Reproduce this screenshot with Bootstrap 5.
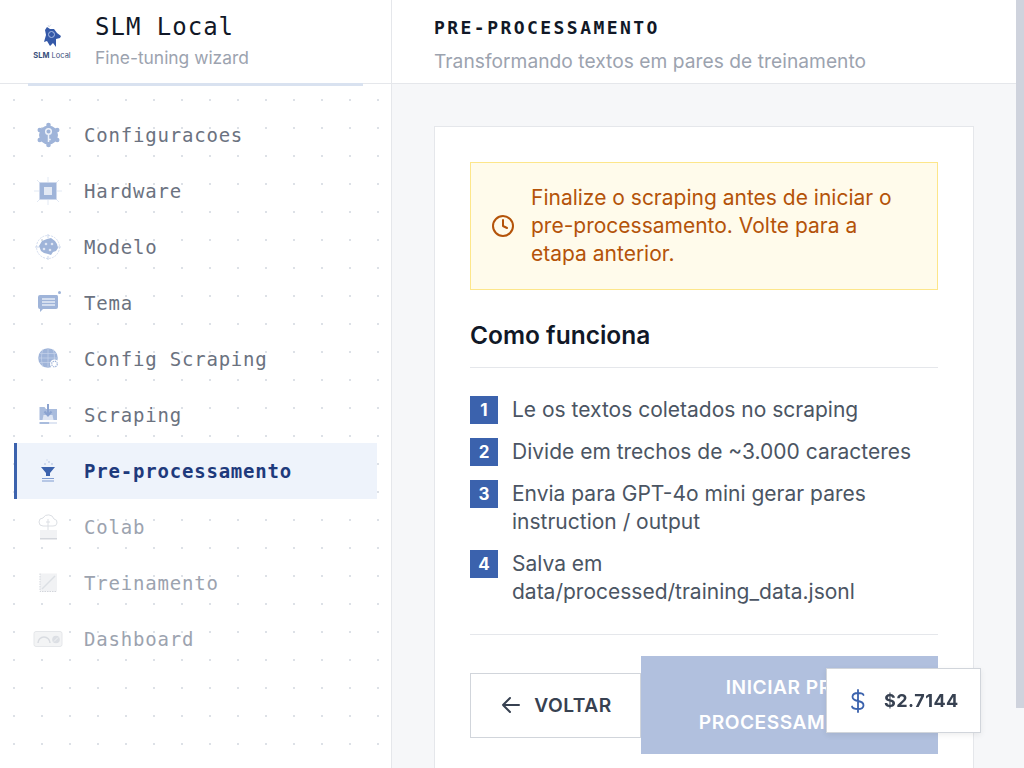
<!DOCTYPE html>
<html lang="pt-BR">
<head>
<meta charset="utf-8">
<title>SLM Local</title>
<link href="https://cdn.jsdelivr.net/npm/bootstrap@5.3.0/dist/css/bootstrap.min.css" rel="stylesheet">
<style>
html,body{height:100%;overflow:hidden}
body{font-family:Inter,"Liberation Sans",sans-serif;background:#f6f7f9;color:#111827}
.shell{height:768px}
.side{width:392px;flex:none;border-right:1px solid #e5e7eb;background-color:#fff;background-image:radial-gradient(circle,#dde1e7 .9px,transparent 1.2px);background-size:28px 28px;background-position:0 2px}
.brandbar{height:84px;background:#fff;border-bottom:1px solid #e5e7eb;padding-left:28px;gap:19px}
.brandname{font-family:"DejaVu Sans Mono",monospace;font-size:24px;line-height:32px;letter-spacing:1px;color:#111827;margin-top:-1px}
.brandsub{font-size:17.4px;line-height:28px;color:#9ca3af;margin-top:1px}
.logotext{font-size:7.5px;line-height:9px;color:#3a4f7c;white-space:nowrap;text-align:center;margin-top:2px}
.sideline{height:3px;margin:0 28px;background:#d9e2f0;margin-top:-1px}
.steps{margin:21px 14px 0 14px}
.stepitem{height:56px;border-left:3px solid transparent;padding-left:15px;gap:20px;color:#6b7280;font-family:"DejaVu Sans Mono",monospace;font-size:19px;letter-spacing:.8px}
.stepitem svg{flex:none}
.stepitem.here{background:#eef3fb;border-left-color:#3b62ad;color:#1e3a7c;font-weight:700}
.stepitem.off{color:#9ca3af}
.pane{min-width:0;overflow:hidden}
.rail{width:8px;flex:none;background:#f6f7f9}
.railthumb{height:708px;background:#cfd3dd}
.panehead{height:84px;background:#fff;border-bottom:1px solid #e5e7eb;padding:6px 42px 0}
.panetitle{font-family:"DejaVu Sans Mono",monospace;font-weight:700;font-size:18px;line-height:24px;letter-spacing:2.45px;color:#111827;margin:0;margin-top:2px}
.panesub{font-size:19.2px;line-height:28px;color:#9ca3af;margin-top:7px;letter-spacing:.03px}
.panebody{padding:42px 42px 42px}
.sheet{background:#fff;border:1px solid #e5e7eb;padding:35px}
.warn{background:#fffbeb;border:1px solid #fde68a;color:#b45309;font-size:21px;line-height:28px;padding:21px 30px 21px 20px;gap:16px}
.warn svg{flex:none}
.howtitle{font-size:24.5px;font-weight:600;line-height:32px;color:#111827;margin:29px 0 0;padding-bottom:16px;border-bottom:1px solid #e5e7eb}
.howlist{list-style:none;margin:28px 0 0;padding:0 0 28px;border-bottom:1px solid #e5e7eb;gap:14px;color:#4b5563;font-size:21px;line-height:28px}
.hownum{width:28px;height:28px;flex:none;background:#3b62ad;color:#fff;font-size:17px;font-weight:700}
.howtext{margin-left:14px}
.actions{margin-top:21px}
.backbtn{height:65px;width:171px;flex:none;border:1px solid #d1d5db;background:#fff;color:#374151;font-size:19.2px;font-weight:600;letter-spacing:.5px;border-radius:0;gap:11px}
.gobtn.btn:disabled{width:297px;height:98px;flex:none;background:#b1c0de;color:#fff;font-size:19.2px;font-weight:600;line-height:35px;letter-spacing:.5px;border-radius:0;border:0;padding:0 50px;text-transform:uppercase;opacity:1}
.cost{position:fixed;left:826px;top:668px;width:155px;height:65px;background:#fff;border:1px solid #d1d5db;box-shadow:0 2px 6px rgba(0,0,0,.07);padding-left:22px;gap:17px;font-size:18px;font-weight:700;color:#374151;letter-spacing:.5px}
</style>
</head>
<body>
<div class="shell d-flex">
  <aside class="side d-flex flex-column">
    <div class="brandbar d-flex align-items-center">
      <div class="d-flex flex-column align-items-center" style="width:48px">
        <svg width="20" height="25" viewBox="0 0 20 25"><path fill="#3559a8" d="M5 3l3 2h4l3 4 4 3-1 2-4 1v8l-3-4-3 3-3-5-3 1 2-7-1-5z"/><circle cx="9.500" cy="10.500" r="3" fill="none" stroke="#a9bde6" stroke-width="1"/><path d="M6 1l1 2 2-2.500" stroke="#c4cee2" stroke-width=".7" fill="none"/></svg>
        <div class="logotext"><b>SLM</b> Local</div>
      </div>
      <div class="d-flex flex-column">
        <div class="brandname">SLM Local</div>
        <div class="brandsub">Fine-tuning wizard</div>
      </div>
    </div>
    <div class="sideline"></div>
    <nav class="nav flex-column flex-nowrap steps">
      <a class="stepitem d-flex align-items-center text-decoration-none" href="#">
        <svg width="32" height="32" viewBox="0 0 32 32"><g fill="#9fb4d9"><circle cx="16.500" cy="16" r="9.500"/><circle cx="16.500" cy="6" r="2.300"/><circle cx="16.500" cy="26" r="2.300"/><circle cx="7.800" cy="11" r="2.300"/><circle cx="25.200" cy="11" r="2.300"/><circle cx="7.800" cy="21" r="2.300"/><circle cx="25.200" cy="21" r="2.300"/></g><circle cx="16.500" cy="12.500" r="2.800" fill="none" stroke="#eef2f9" stroke-width="1.500"/><path d="M16.500 15.500v7.500m0-2.500h2.200" fill="none" stroke="#eef2f9" stroke-width="1.500"/></svg>
        Configuracoes</a>
      <a class="stepitem d-flex align-items-center text-decoration-none" href="#">
        <svg width="32" height="32" viewBox="0 0 32 32"><path d="M5 5l4 4M27 5l-4 4M5 27l4-4M27 27l-4-4M2 16h5M25 16h5M16 2v5M16 25v5" stroke="#dbe3f1" stroke-width=".8"/><rect x="7.500" y="7.500" width="17" height="17" fill="#9fb4d9"/><rect x="12" y="12" width="8" height="8" fill="#e3e9f4"/></svg>
        Hardware</a>
      <a class="stepitem d-flex align-items-center text-decoration-none" href="#">
        <svg width="32" height="32" viewBox="0 0 32 32"><circle cx="16" cy="16" r="11.500" fill="none" stroke="#d5def0" stroke-width="1" stroke-dasharray="2 1"/><path d="M16 3v4M16 25v4M3 16h4M25 16h4" stroke="#cdd8ec" stroke-width="1"/><path fill="#9fb4d9" d="M7 15l3-5 5-2 4-1 4 3 2 3 1 4-2 3-3 1-2 3-3-1-4-1-3-2z"/><circle cx="14" cy="13" r="1.300" fill="#dfe6f3"/><circle cx="20" cy="13" r="1.300" fill="#dfe6f3"/><circle cx="18" cy="19" r="1.300" fill="#dfe6f3"/><circle cx="12" cy="18" r="1.300" fill="#dfe6f3"/></svg>
        Modelo</a>
      <a class="stepitem d-flex align-items-center text-decoration-none" href="#">
        <svg width="32" height="32" viewBox="0 0 32 32"><path fill="#9fb4d9" d="M8 8h17a2 2 0 0 1 1 2v10a2 2 0 0 1-2 2H11l-3 3v-3a2 2 0 0 1-2-2V10a2 2 0 0 1 2-2z"/><path d="M10 12h13M10 15h13M10 18h13" stroke="#e6ecf6" stroke-width="1.300"/><circle cx="27.500" cy="5.500" r="1.500" fill="#9fb4d9"/></svg>
        Tema</a>
      <a class="stepitem d-flex align-items-center text-decoration-none" href="#">
        <svg width="32" height="32" viewBox="0 0 32 32"><circle cx="16" cy="15" r="9.800" fill="#9fb4d9"/><path d="M6 15h20M7.500 10.500h17M7.500 19.500h17M16 5v20M11 6c-2 5-2 13 0 18M21 6c2 5 2 13 0 18" fill="none" stroke="#c5d2e9" stroke-width=".7"/><circle cx="22.500" cy="21" r="4.500" fill="#fff"/><circle cx="22.500" cy="21" r="2.800" fill="none" stroke="#9fb4d9" stroke-width="1.200" stroke-dasharray="1.400 .8"/></svg>
        Config Scraping</a>
      <a class="stepitem d-flex align-items-center text-decoration-none" href="#">
        <svg width="32" height="32" viewBox="0 0 32 32"><path fill="#a9bcdd" d="M7.500 8l5 0 1.500 2h11v11h-17.500z"/><path fill="#dfe6f3" d="M11.500 16h9l1 5h-11z"/><path d="M16 5v11M12.500 12.500l3.500 4 3.500-4" fill="none" stroke="#8ba3d0" stroke-width="2"/><rect x="7.500" y="23" width="10" height="2" fill="#a9bcdd"/><rect x="17.500" y="23" width="7.500" height="2" fill="#dfe6f3"/></svg>
        Scraping</a>
      <a class="stepitem here d-flex align-items-center text-decoration-none" href="#">
        <svg width="32" height="32" viewBox="0 0 32 32"><path fill="#3b62ad" d="M9 12h14l-5 6v3h-4v-3z"/><path d="M10 23.500h12M10 26h12" stroke="#7f9bd0" stroke-width="1"/><circle cx="13" cy="9" r=".8" fill="#a9bcdd"/><circle cx="17" cy="7" r=".8" fill="#a9bcdd"/><circle cx="20" cy="9" r=".8" fill="#a9bcdd"/><circle cx="15" cy="5" r=".7" fill="#c6d3ea"/></svg>
        Pre-processamento</a>
      <a class="stepitem off d-flex align-items-center text-decoration-none" href="#">
        <svg width="32" height="32" viewBox="0 0 32 32"><path d="M11 15h10a3.500 3.500 0 0 0 1-7 6 6 0 0 0-11-1 4 4 0 0 0 0 8z" fill="#fff" stroke="#dcdfe4" stroke-width="1"/><path d="M16 8v11M14 11h4" stroke="#dcdfe4" stroke-width="1"/><rect x="8" y="19" width="17" height="9" fill="#f1f2f4"/><rect x="8" y="27" width="17" height="1.500" fill="#d3d6dc"/></svg>
        Colab</a>
      <a class="stepitem off d-flex align-items-center text-decoration-none" href="#">
        <svg width="32" height="32" viewBox="0 0 32 32"><rect x="8" y="6.500" width="17" height="18" fill="#f1f2f4"/><path d="M8 6.500v18h17" fill="none" stroke="#d3d6dc" stroke-width="1" stroke-dasharray="1.500 1"/><path d="M10 22L23 9" stroke="#dcdfe4" stroke-width="1.500"/></svg>
        Treinamento</a>
      <a class="stepitem off d-flex align-items-center text-decoration-none" href="#">
        <svg width="32" height="32" viewBox="0 0 32 32"><rect x="2" y="8.500" width="28" height="15" rx="2" fill="#f3f4f5" stroke="#e5e7ea" stroke-width="1"/><path d="M6 20a6 6 0 0 1 12 0" fill="none" stroke="#d9dce1" stroke-width="1.500"/><circle cx="24" cy="16.500" r="3.800" fill="#dcdfe4"/><path d="M22 18.500l4-4" stroke="#f3f4f5" stroke-width="1"/></svg>
        Dashboard</a>
    </nav>
  </aside>
  <main class="pane flex-grow-1">
    <header class="panehead d-flex flex-column justify-content-center">
      <h1 class="panetitle">PRE-PROCESSAMENTO</h1>
      <div class="panesub">Transformando textos em pares de treinamento</div>
    </header>
    <div class="panebody">
      <section class="sheet">
        <div class="warn d-flex align-items-center">
          <svg width="24" height="24" viewBox="0 0 24 24" fill="none" stroke="#b45309" stroke-width="2" stroke-linecap="round" stroke-linejoin="round"><circle cx="12" cy="12" r="10"/><path d="M12 6v6l4 2"/></svg>
          <div>Finalize o scraping antes de iniciar o pre-processamento. Volte para a etapa anterior.</div>
        </div>
        <h2 class="howtitle">Como funciona</h2>
        <ol class="howlist d-flex flex-column">
          <li class="d-flex"><span class="hownum d-flex align-items-center justify-content-center">1</span><span class="howtext">Le os textos coletados no scraping</span></li>
          <li class="d-flex"><span class="hownum d-flex align-items-center justify-content-center">2</span><span class="howtext">Divide em trechos de ~3.000 caracteres</span></li>
          <li class="d-flex"><span class="hownum d-flex align-items-center justify-content-center">3</span><span class="howtext">Envia para GPT-4o mini gerar pares instruction / output</span></li>
          <li class="d-flex"><span class="hownum d-flex align-items-center justify-content-center">4</span><span class="howtext">Salva em data/processed/training_data.jsonl</span></li>
        </ol>
        <div class="actions d-flex align-items-center">
          <button type="button" class="btn backbtn d-flex align-items-center justify-content-center">
            <svg width="24" height="24" viewBox="0 0 24 24" fill="none" stroke="#374151" stroke-width="2" stroke-linecap="round" stroke-linejoin="round"><path d="M20 12H4M11 19l-7-7 7-7"/></svg>
            VOLTAR
          </button>
          <button type="button" class="btn gobtn" disabled>Iniciar Pre-processamento</button>
        </div>
      </section>
    </div>
  </main>
  <div class="rail"><div class="railthumb"></div></div>
</div>
<div class="cost d-flex align-items-center">
  <svg width="18" height="26" viewBox="0 0 18 26" fill="none" stroke="#3b62ad" stroke-width="1.800" stroke-linecap="round" stroke-linejoin="round"><path d="M9 2v22M14.500 7C14 5.500 12 5 9 5 6 5 3.500 6 3.500 8.800 3.500 11.500 6 12.500 9 13c3 .5 5.500 1.500 5.500 4.200C14.500 20 12 21 9 21c-3 0-5.500-.5-6-2.500"/></svg>
  <span>$2.7144</span>
</div>
<script src="https://cdn.jsdelivr.net/npm/bootstrap@5.3.0/dist/js/bootstrap.bundle.min.js"></script>
</body>
</html>
